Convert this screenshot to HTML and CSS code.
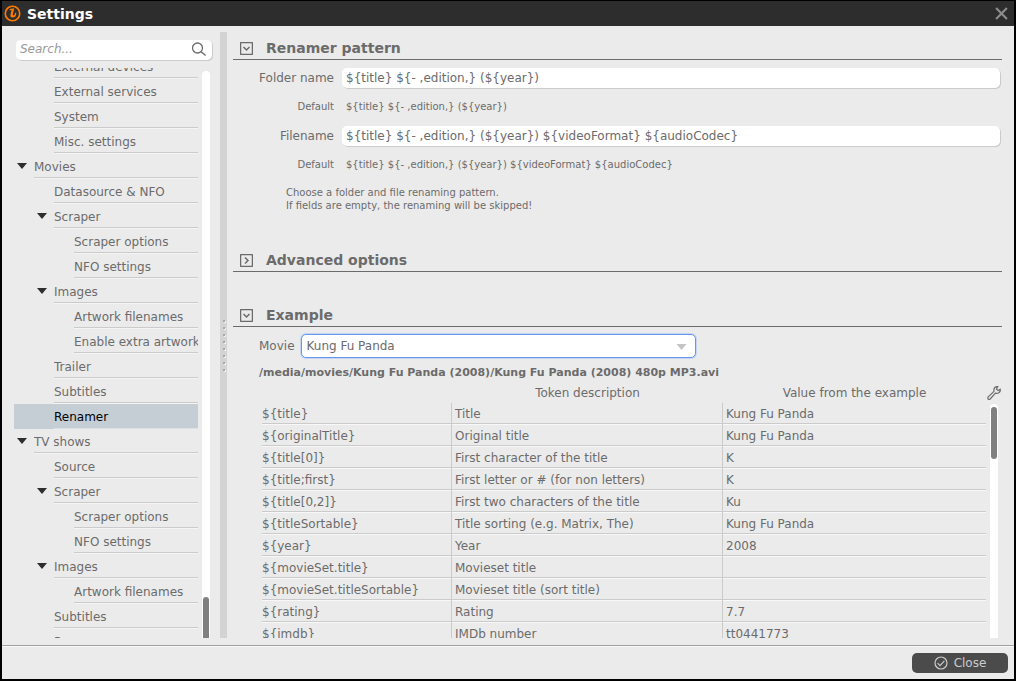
FILE: index.html
```html
<!DOCTYPE html>
<html lang="en">

	<head>
		<meta charset="UTF-8">
		<title>Settings</title>
		<link rel="stylesheet" href="styles.css">
	</head>

	<body>
		<div id="window">
			<header>
				<svg class="logo" viewBox="0 0 16 16"><circle cx="8" cy="8" r="6.8" /><path class="t" d="M5.4 3.8 L9.6 3 L8.3 9 Q8.2 10.4 9.4 9.6 Q10.4 8.8 10.4 7.2 L11.6 7.2 Q11.4 11.8 8 11.8 Q5.6 11.6 6.1 9.2 L7.1 4.8 L5.4 5 Z" /></svg>
				<h1>Settings</h1>
				<button class="exit" aria-label="Close window"><svg viewBox="0 0 12 12"><path d="M1 1 L11 11 M11 1 L1 11" /></svg></button>
			</header>

			<div id="content">
				<aside>
					<div class="search">
						<input type="text" placeholder="Search..." aria-label="Search">
						<svg viewBox="0 0 16 16"><circle cx="6.5" cy="6" r="5" /><path d="M10.2 9.7 L14.6 13.6" /></svg>
					</div>
					<nav>
						<ul>
							<li class="l2"><a href="#">External devices</a></li>
							<li class="l2"><a href="#">External services</a></li>
							<li class="l2"><a href="#">System</a></li>
							<li class="l2"><a href="#">Misc. settings</a></li>
							<li class="l1 open"><a href="#">Movies</a></li>
							<li class="l2"><a href="#">Datasource &amp; NFO</a></li>
							<li class="l2 open"><a href="#">Scraper</a></li>
							<li class="l3"><a href="#">Scraper options</a></li>
							<li class="l3"><a href="#">NFO settings</a></li>
							<li class="l2 open"><a href="#">Images</a></li>
							<li class="l3"><a href="#">Artwork filenames</a></li>
							<li class="l3"><a href="#">Enable extra artwork</a></li>
							<li class="l2"><a href="#">Trailer</a></li>
							<li class="l2"><a href="#">Subtitles</a></li>
							<li class="l2 ac"><a href="#">Renamer</a></li>
							<li class="l1 open"><a href="#">TV shows</a></li>
							<li class="l2"><a href="#">Source</a></li>
							<li class="l2 open"><a href="#">Scraper</a></li>
							<li class="l3"><a href="#">Scraper options</a></li>
							<li class="l3"><a href="#">NFO settings</a></li>
							<li class="l2 open"><a href="#">Images</a></li>
							<li class="l3"><a href="#">Artwork filenames</a></li>
							<li class="l2"><a href="#">Subtitles</a></li>
							<li class="l2"><a href="#">Renamer</a></li>
						</ul>
						<div class="bar"><i></i></div>
					</nav>
				</aside>

				<div class="split"><i></i><i></i><i></i><i></i><i></i><i></i><i></i><i></i></div>

				<main>
					<section class="pattern">
						<h2><button aria-label="Collapse"><svg viewBox="0 0 13 13"><rect x="0.5" y="0.5" width="12" height="12" rx="1" /><path d="M3.5 5 L6.5 8 L9.5 5" /></svg></button>Renamer pattern</h2>
						<div class="form">
							<label for="folder">Folder name</label>
							<input type="text" id="folder" value="${title} ${- ,edition,} (${year})">
							<small>Default</small>
							<small class="def">${title} ${- ,edition,} (${year})</small>
							<label for="file">Filename</label>
							<input type="text" id="file" value="${title} ${- ,edition,} (${year}) ${videoFormat} ${audioCodec}">
							<small>Default</small>
							<small class="def">${title} ${- ,edition,} (${year}) ${videoFormat} ${audioCodec}</small>
						</div>
						<p class="hint">Choose a folder and file renaming pattern.<br>If fields are empty, the renaming will be skipped!</p>
					</section>

					<section class="advanced">
						<h2><button aria-label="Expand"><svg viewBox="0 0 13 13"><rect x="0.5" y="0.5" width="12" height="12" rx="1" /><path d="M5 3.5 L8 6.5 L5 9.5" /></svg></button>Advanced options</h2>
					</section>

					<section class="example">
						<h2><button aria-label="Collapse"><svg viewBox="0 0 13 13"><rect x="0.5" y="0.5" width="12" height="12" rx="1" /><path d="M3.5 5 L6.5 8 L9.5 5" /></svg></button>Example</h2>
						<div class="movie">
							<label for="movie">Movie</label>
							<div class="combo">
								<select id="movie">
									<option>Kung Fu Panda</option>
								</select>
							</div>
						</div>
						<p class="path">/media/movies/Kung Fu Panda (2008)/Kung Fu Panda (2008) 480p MP3.avi</p>
						<div class="tokens">
							<div class="scroll">
								<table>
									<thead>
										<tr><th></th><th>Token description</th><th>Value from the example</th></tr>
									</thead>
									<tbody>
										<tr><td>${title}</td><td>Title</td><td>Kung Fu Panda</td></tr>
										<tr><td>${originalTitle}</td><td>Original title</td><td>Kung Fu Panda</td></tr>
										<tr><td>${title[0]}</td><td>First character of the title</td><td>K</td></tr>
										<tr><td>${title;first}</td><td>First letter or # (for non letters)</td><td>K</td></tr>
										<tr><td>${title[0,2]}</td><td>First two characters of the title</td><td>Ku</td></tr>
										<tr><td>${titleSortable}</td><td>Title sorting (e.g. Matrix, The)</td><td>Kung Fu Panda</td></tr>
										<tr><td>${year}</td><td>Year</td><td>2008</td></tr>
										<tr><td>${movieSet.title}</td><td>Movieset title</td><td></td></tr>
										<tr><td>${movieSet.titleSortable}</td><td>Movieset title (sort title)</td><td></td></tr>
										<tr><td>${rating}</td><td>Rating</td><td>7.7</td></tr>
										<tr><td>${imdb}</td><td>IMDb number</td><td>tt0441773</td></tr>
									</tbody>
								</table>
							</div>
							<div class="side">
								<button aria-label="Configure columns"><svg viewBox="0 0 16 16"><path d="M14.2 4.2 L12 5.6 L10.4 4.2 L11.8 1.6 Q8.6 1.2 8 4 Q7.8 5.6 8 6.4 L2 12 Q1.4 13.2 2.2 14 Q3 14.8 4.2 14 L9.4 8.2 Q11 8.6 12.4 8 Q14.8 6.8 14.2 4.2 Z" /></svg></button>
								<div class="bar"><i></i></div>
							</div>
						</div>
					</section>
				</main>
			</div>

			<footer>
				<button class="close"><svg viewBox="0 0 14 14"><circle cx="7" cy="7" r="6" /><path d="M3.6 7.2 L6 9.6 L10.4 4.8" /></svg>Close</button>
			</footer>
		</div>
	</body>

</html>
```
FILE: styles.css
```css
* {
	margin: 0;
	padding: 0;
	box-sizing: border-box;
}

body,
input,
select,
button {
	font-family: "DejaVu Sans", sans-serif;
	font-size: 12px;
	color: #6b6b6b;
}

li {
	list-style: none;
}

a {
	color: inherit;
	text-decoration: none;
}

button {
	border: 0;
	background: none;
}

svg {
	display: block;
	fill: none;
	stroke: #6b6b6b;
}

#window {
	display: flex;
	flex-direction: column;
	height: 100vh;
	overflow: hidden;
	border: 1px solid #000;
	border-width: 1px 2px 2px;
	background: #ebebeb;
}

header {
	display: flex;
	align-items: center;
	flex: none;
	height: 25px;
	padding: 0 6px 0 2px;
	background: #2d2d2d;
}

header .logo {
	width: 17px;
	height: 17px;
	stroke: #ff7b00;
	stroke-width: 1.5;
}

.logo .t {
	fill: #ff7b00;
	stroke: none;
}

h1 {
	flex: 1;
	margin-left: 6px;
	font-size: 14px;
	color: #fff;
}

.exit svg {
	width: 13px;
	height: 13px;
	stroke: #8c8c8c;
	stroke-width: 2;
}

#content {
	display: flex;
	flex: 1;
	min-height: 0;
	padding-bottom: 7px;
}

aside {
	display: flex;
	flex-direction: column;
	flex: none;
	width: 218px;
	padding: 14px 8px 0 12px;
}

.search {
	display: flex;
	align-items: center;
	flex: none;
	height: 20px;
	margin: 0 0 8px 2px;
	padding: 0 5px 0 4px;
	border-radius: 5px;
	background: #fff;
	box-shadow: 1px 1px 0 #cbcbcb;
}

.search input {
	flex: 1;
	min-width: 0;
	height: 18px;
	padding-bottom: 2px;
	border: 0;
	outline: 0;
	background: none;
}

.search input::placeholder {
	color: #999;
	font-style: italic;
}

.search svg {
	width: 16px;
	height: 16px;
	stroke-width: 1.3;
}

nav {
	display: flex;
	flex: 1;
	min-height: 0;
}

nav ul {
	display: flex;
	flex-direction: column;
	justify-content: flex-start;
	flex: 1;
	min-width: 0;
	overflow: hidden;
}

nav li {
	flex: none;
	height: 25px;
}

nav li:first-child {
	margin-top: -14px;
}

nav li a {
	display: block;
	height: 25px;
	line-height: 26px;
	overflow: hidden;
	white-space: nowrap;
	box-shadow: inset 0 -1px #f4f4f4, inset 0 -2px #cbcbcb;
}

.l1 {
	padding-left: 20px;
}

.l2 {
	padding-left: 40px;
}

.l3 {
	padding-left: 60px;
}

nav .open {
	display: flex;
}

nav .open a {
	flex: 1;
}

nav .open::before {
	content: "";
	width: 10px;
	height: 6px;
	margin: 9px 7px 0 -17px;
	background: #2d2d2d;
	clip-path: polygon(0 0, 100% 0, 50% 100%);
}

nav .ac {
	background: #c5cdd5;
	color: #000;
}

nav .ac a {
	box-shadow: inset 0 -1px #dde1e5;
}

.bar {
	flex: none;
	width: 8px;
	border-radius: 4px 4px 0 0;
	background: #fff;
}

.bar i {
	display: block;
	width: 6px;
	margin: 0 auto;
	background: #808080;
}

nav .bar {
	display: flex;
	align-items: flex-end;
	margin: 3px 2px 0 4px;
}

nav .bar i {
	height: 41px;
	border-radius: 3px 3px 0 0;
}

.split {
	display: flex;
	flex-direction: column;
	align-items: center;
	justify-content: center;
	flex: none;
	gap: 5px;
	width: 7px;
	margin-top: 6px;
	padding-top: 20px;
	background: #d3d3d3;
}

.split i {
	width: 2px;
	height: 2px;
	background: #a8a8a8;
	box-shadow: 1px 1px #f0f0f0;
}

main {
	display: flex;
	flex-direction: column;
	flex: 1;
	min-width: 0;
	padding: 10px 12px 0 6px;
}

h2 {
	display: flex;
	align-items: center;
	height: 24px;
	border-bottom: 1px solid #6b6b6b;
	font-size: 14px;
}

h2 button {
	margin: 2px 13px 0 7px;
}

h2 svg {
	width: 13px;
	height: 13px;
	stroke-width: 1.5;
}

.form {
	display: grid;
	grid-template-columns: 101px 1fr;
	grid-template-rows: 20px 38px 20px 38px;
	align-items: center;
	column-gap: 8px;
	margin-top: 8px;
	padding-right: 2px;
}

.form label,
.form small {
	text-align: right;
}

.form small {
	padding-bottom: 2px;
	font-size: 10px;
}

.form .def {
	padding-left: 4px;
	text-align: left;
}

.form input {
	width: 100%;
	height: 20px;
	padding: 0 4px;
	border: 0;
	border-radius: 5px;
	outline: 0;
	background: #fff;
	box-shadow: 1px 1px 0 #cbcbcb;
}

.hint {
	margin: 2px 0 0 53px;
	font-size: 10px;
	line-height: 13px;
}

.advanced {
	margin-top: 36px;
}

.example {
	display: flex;
	flex-direction: column;
	flex: 1;
	min-height: 0;
	margin-top: 31px;
}

.example h2 {
	flex: none;
}

.movie {
	display: flex;
	align-items: center;
	flex: none;
	gap: 6px;
	margin: 7px 0 0 26px;
}

.combo {
	position: relative;
	width: 395px;
}

.combo::after {
	content: "";
	position: absolute;
	right: 9px;
	top: 10px;
	width: 10px;
	height: 6px;
	background: #c4c4c4;
	clip-path: polygon(0 0, 100% 0, 50% 100%);
	pointer-events: none;
}

.combo select {
	display: block;
	width: 100%;
	height: 24px;
	padding: 0 5px 1px;
	appearance: none;
	border: 1px solid #6699ee;
	border-radius: 5px;
	outline: 0;
	background: #fff;
	box-shadow: 0 0 0 1px #c3d5f2;
}

.path {
	flex: none;
	margin: 7px 0 0 26px;
	font-size: 11px;
	font-weight: bold;
	line-height: 16px;
}

.tokens {
	display: flex;
	flex: 1;
	min-height: 0;
	margin: 2px 0 0 29px;
}

.scroll {
	flex: 1;
	overflow: hidden;
}

table {
	width: 100%;
	table-layout: fixed;
	border-spacing: 0;
}

th {
	height: 20px;
	font-weight: normal;
}

th:nth-child(1) {
	width: 190px;
}

th:nth-child(2) {
	width: 271px;
}

td {
	height: 22px;
	padding: 0 3px;
	border-right: 1px solid #cbcbcb;
	box-shadow: inset 0 -1px #f8f8f8, inset 0 -2px #cbcbcb;
}

td:first-child {
	padding-left: 0;
}

td:last-child {
	border-right: 0;
}

.side {
	display: flex;
	flex-direction: column;
	align-items: center;
	flex: none;
	width: 16px;
}

.side button svg {
	width: 16px;
	height: 16px;
	margin: 2px 0 3px;
	stroke-width: 1.2;
}

.side .bar {
	flex: 1;
	padding-top: 3px;
}

.side .bar i {
	height: 52px;
	border-radius: 3px;
}

footer {
	display: flex;
	align-items: center;
	justify-content: flex-end;
	flex: none;
	height: 34px;
	padding: 0 6px 0 0;
	border-top: 1px solid #a0a0a0;
	box-shadow: inset 0 1px #f8f8f8;
}

.close {
	display: flex;
	align-items: center;
	justify-content: center;
	gap: 6px;
	width: 96px;
	height: 20px;
	border-radius: 5px;
	background: #4b4b4b;
	color: #ccc;
}

.close svg {
	width: 14px;
	height: 14px;
	stroke: #ccc;
	stroke-width: 1.2;
}
```
